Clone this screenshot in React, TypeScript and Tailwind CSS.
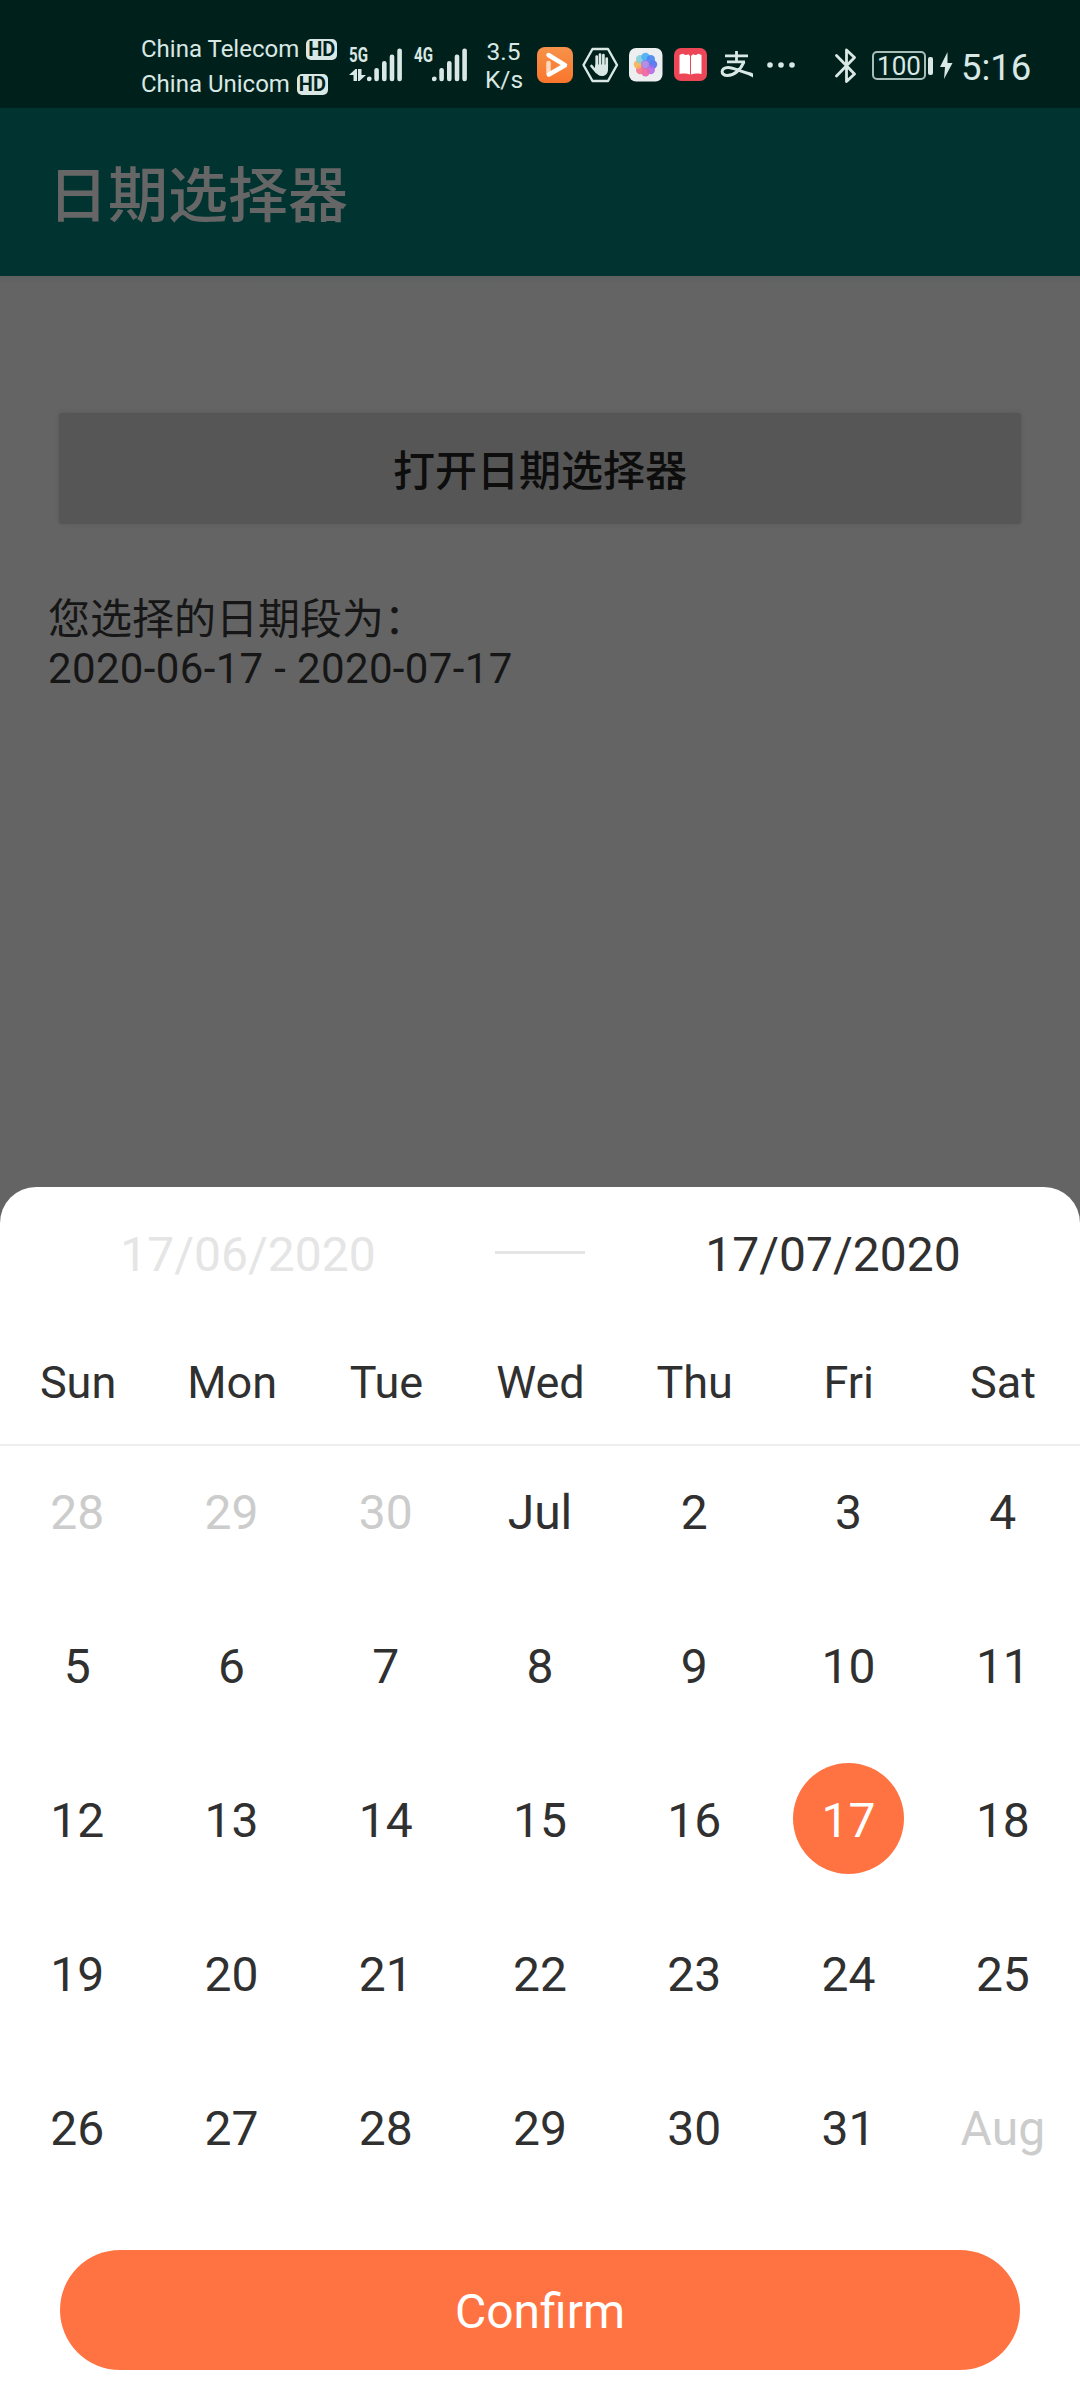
import React from "react";

const days = ["Sun", "Mon", "Tue", "Wed", "Thu", "Fri", "Sat"];
const cells = [
  "28", "29", "30", "Jul", "2", "3", "4",
  "5", "6", "7", "8", "9", "10", "11",
  "12", "13", "14", "15", "16", "17", "18",
  "19", "20", "21", "22", "23", "24", "25",
  "26", "27", "28", "29", "30", "31", "Aug",
];
const SELECTED = 19;

function HdBadge() {
  return (
    <span className="flex h-[21px] w-[31px] shrink-0 items-center justify-center rounded-[5px] bg-[#d9e8e4] text-[20px] leading-none font-bold text-[#00211b]">
      HD
    </span>
  );
}

function SignalBars() {
  return (
    <svg className="h-[34px] w-[36px]" viewBox="0 0 36 34" fill="#d9e8e4">
      <circle cx="2.3" cy="30.8" r="2.4" />
      <rect x="7.3" y="20" width="4.6" height="13.2" rx="2.2" />
      <rect x="15" y="13" width="4.6" height="20.2" rx="2.2" />
      <rect x="22.7" y="6.5" width="4.6" height="26.7" rx="2.2" />
      <rect x="30.3" y="0.5" width="4.6" height="32.7" rx="2.2" />
    </svg>
  );
}

function NetLabel({ children }: { children: React.ReactNode }) {
  return (
    <span className="block w-[26px] origin-left scale-x-[0.72] text-[21px] leading-[15px] font-bold">{children}</span>
  );
}

// Petals run clockwise from the right-hand one.
const petals = [
  { x: 24, y: 16.5, c: "#5b6cf0" },
  { x: 21.8, y: 22, c: "#b26be6" },
  { x: 16.5, y: 24.2, c: "#ee5fa6" },
  { x: 11.2, y: 22, c: "#f4708a" },
  { x: 9, y: 16.5, c: "#f7b05c" },
  { x: 11.2, y: 11.2, c: "#7fcdd8" },
  { x: 16.5, y: 9, c: "#45aef5" },
  { x: 21.8, y: 11.2, c: "#4a84f2" },
];

function FlowerIcon() {
  return (
    <svg className="h-[34px] w-[34px]" viewBox="0 0 34 34">
      <rect width="33.5" height="33.5" rx="7" fill="#eceef0" />
      {petals.map((p) => (
        <circle key={p.c} cx={p.x} cy={p.y} r="4.2" fill={p.c} fillOpacity="0.9" />
      ))}
      <circle cx="16.5" cy="16.5" r="4.5" fill="#a070e0" fillOpacity="0.75" />
    </svg>
  );
}

function StatusBar() {
  return (
    <div className="flex h-[108px] items-start bg-[#00211b] pl-[141px] text-[#d9e8e4]">
      <div className="mt-[36px] flex w-[208px] flex-col gap-[9px] text-[24px] leading-[26px] whitespace-nowrap">
        <div className="flex items-center gap-[7px]">China Telecom <HdBadge /></div>
        <div className="flex items-center gap-[7px]">China Unicom <HdBadge /></div>
      </div>
      <div className="mt-[48px] flex w-[65px]">
        <div className="w-[18px]">
          <NetLabel>5G</NetLabel>
          <svg className="mt-[6px] h-[12px] w-[18px]" viewBox="0 0 18 12" fill="#d9e8e4">
            <path d="M0 6 6.500 0H8v12H4.500V6zM17 6l-6.500 6H9V0h3.500v6z" />
          </svg>
        </div>
        <SignalBars />
      </div>
      <div className="mt-[48px] flex w-[71px]">
        <div className="w-[18px]"><NetLabel>4G</NetLabel></div>
        <SignalBars />
      </div>
      <div className="mt-[38px] w-[37px] text-center text-[24.5px] leading-[28px]">
        <div>3.5</div>
        <div>K/s</div>
      </div>
      <div className="mt-[47px] ml-[15px] flex items-center">
        <svg className="h-[36px] w-[36px]" viewBox="0 0 36 36">
          <defs>
            <linearGradient id="video" x1="0" y1="0" x2="0" y2="1">
              <stop offset="0" stopColor="#f7924a" />
              <stop offset="1" stopColor="#f9762c" />
            </linearGradient>
          </defs>
          <rect width="36" height="36" rx="8" fill="url(#video)" />
          <path d="M11.500 16v11" fill="none" stroke="#ffd9bd" strokeWidth="4.500" strokeLinecap="round" />
          <path d="M11.500 8 28 18.200 12 27.500" fill="none" stroke="#fff" strokeWidth="4.500" strokeLinecap="round" strokeLinejoin="round" />
        </svg>
        <svg className="ml-[9px] h-[36px] w-[37px]" viewBox="0 0 37 36">
          <path d="M10.500 2h15.500l9 16-9 16H10.500l-9-16z" fill="none" stroke="#d9e8e4" strokeWidth="2.400" strokeLinejoin="round" />
          <g fill="none" stroke="#d9e8e4" strokeWidth="2.700" strokeLinecap="round">
            <path d="M14.700 20V9.500M18 19V7.500M21.400 19V8M24.700 20v-8.500M9.500 19l5 6" />
          </g>
          <path d="M13.400 17.500H26v5c0 4-2.500 6.500-6 6.500-3.500 0-5.500-2-7.500-5.500z" fill="#d9e8e4" />
        </svg>
        <div className="ml-[10px]"><FlowerIcon /></div>
        <svg className="ml-[11px] h-[34px] w-[34px]" viewBox="0 0 34 34">
          <rect width="33" height="33" rx="7" fill="#ec4657" />
          <path d="M5.500 7c1 0 2-1.200 3-1.200S10.500 7 11.500 7s2-.8 3-.8L16 8v18.500c-3-1.200-6.500-1.200-10.500-.5zM17 8l2-1.800c1 0 2 .8 3 .8s1.500-1.200 2.500-1.200 2 1.200 3 1.200v19c-4-.7-7.500-.7-10.500.5z" fill="#fff" />
        </svg>
        <svg className="ml-[12px] h-[28px] w-[34px]" viewBox="0 0 34 28" fill="none" stroke="#d9e8e4">
          <path d="M5 4.800h23M16.500 0v11M7 10.800h18" strokeWidth="2.800" />
          <path d="M24 10.800C20.500 19 14 24.500 7.500 24.500c-7.500 0-7-8 .5-8 6 0 12 4 24 7" strokeWidth="3" />
          <path d="M20 19.500 33 22.500v4z" fill="#d9e8e4" stroke="none" />
        </svg>
        <svg className="ml-[13px] h-[8px] w-[28px]" viewBox="0 0 28 8" fill="#d9e8e4">
          <circle cx="3" cy="4" r="2.800" /><circle cx="14" cy="4" r="2.800" /><circle cx="25" cy="4" r="2.800" />
        </svg>
      </div>
      <svg className="mt-[48px] ml-[40px] h-[36px] w-[22px]" viewBox="0 0 22 36" fill="none" stroke="#d9e8e4" strokeWidth="2.800" strokeLinejoin="round" strokeLinecap="round">
        <path d="M1.500 7.500 19.500 26 11.500 33.500V2l8 7.500L1.500 28" />
      </svg>
      <div className="mt-[51px] ml-[15px] flex items-center">
        <div className="flex h-[29px] w-[54px] items-center justify-center rounded-[5px] border-2 border-[#a9bdb8] text-[26px] leading-none">100</div>
        <div className="ml-[2px] h-[18px] w-[5px] rounded-[2px] bg-[#d9e8e4]" />
      </div>
      <svg className="mt-[52px] ml-[7px] h-[27px] w-[13px]" viewBox="0 0 13 27" fill="#d9e8e4"><path d="M7.500 0 0 15h5L4 27l8.500-16H7.500z" /></svg>
      <div className="mt-[46px] ml-[8px] text-[36.5px] leading-[43px]">5:16</div>
    </div>
  );
}

export default function App() {
  return (
    <div className="flex h-[2400px] w-[1080px] flex-col overflow-hidden bg-[#646464] font-[Roboto,'Noto_Sans_CJK_SC',sans-serif]">
      <StatusBar />
      <header className="flex h-[168px] items-center bg-[#013430] pt-[10px] pl-[48px] text-[60px] leading-none font-medium text-[#666]">
        日期选择器
      </header>
      <div className="h-[8px] shrink-0 bg-linear-to-b from-[#5c605e] to-[#646464]" />
      <main className="flex-1 pt-[129px]">
        <button className="mx-auto block h-[111px] w-[962px] rounded-[3px] bg-[#565656] pt-[5px] text-[42px] font-medium text-[#0d0d0d] shadow-[0_0_4px_#5a5a5a]">
          打开日期选择器
        </button>
        <div className="mt-[71px] ml-[48px] text-[42px] leading-[49px] text-[#161616]">
          <p>您选择的日期段为：</p>
          <p className="tracking-[0.35px]">2020-06-17 - 2020-07-17</p>
        </div>
      </main>
      <section className="flex h-[1213px] shrink-0 flex-col rounded-t-[36px] bg-white text-[#303030]">
        <div className="flex h-[131px] items-center text-[48px] leading-none">
          <div className="flex-1 pt-[5px] pl-[1px] text-center text-[#e5e5e5]">17/06/2020</div>
          <div className="h-[3px] w-[90px] bg-[#e5e5e5]" />
          <div className="flex-1 pt-[5px] pl-[1px] text-center">17/07/2020</div>
        </div>
        <div className="grid h-[128px] grid-cols-7 items-center border-b-2 border-[#eeeeee] pt-[3px] pl-[1px] text-center text-[45px] leading-none">
          {days.map((d) => <div key={d}>{d}</div>)}
        </div>
        <div className="grid auto-rows-[128px] grid-cols-7 gap-y-[26px] text-[48px] leading-none">
          {cells.map((c, i) => (
            <div key={i} className="flex items-center justify-center">
              <div
                className={
                  i === SELECTED
                    ? "flex h-[111px] w-[111px] items-center justify-center rounded-full bg-[#ff7342] pt-[6px] text-white"
                    : i < 3 || c === "Aug"
                      ? "pt-[6px] text-[#cccccc]"
                      : "pt-[6px]"
                }
              >
                {c}
              </div>
            </div>
          ))}
        </div>
        <button className="mx-[60px] mt-auto mb-[30px] h-[120px] rounded-full bg-[#ff7342] pt-[4px] text-[48px] leading-none text-white">
          Confirm
        </button>
      </section>
    </div>
  );
}
